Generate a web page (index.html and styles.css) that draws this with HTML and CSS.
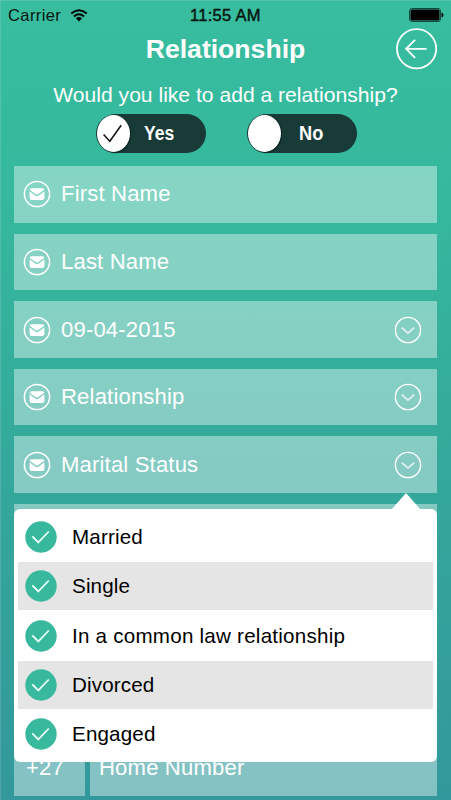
FILE: index.html
```html
<!DOCTYPE html>
<html lang="en">
<head>
<meta charset="utf-8">
<title>Relationship</title>
<link rel="stylesheet" href="styles.css">
</head>
<body>
<svg class="defs" width="0" height="0">
  <symbol id="mail" viewBox="0 0 28 28">
    <circle cx="14" cy="14" r="12.6" fill="none" stroke="currentColor" stroke-width="1.5"/>
    <path d="M8.6 8.2h10.8q2 0 2 1.5L15.1 14.2q-1.1.8-2.2 0L6.6 9.7q0-1.5 2-1.5z" fill="currentColor"/>
    <path d="M6.6 11.2l5.5 4.3q1.9 1.3 3.8 0l5.5-4.3v6.8q0 2-2 2H8.6q-2 0-2-2z" fill="currentColor"/>
  </symbol>
  <symbol id="down" viewBox="0 0 28 28">
    <circle cx="14" cy="14" r="12.6" fill="none" stroke="currentColor" stroke-width="1.4"/>
    <path d="M7.8 11.6l6.2 5.6 6.2-5.6" fill="none" stroke="currentColor" stroke-width="1.7" opacity=".75"/>
  </symbol>
  <symbol id="check" viewBox="0 0 32 32">
    <circle cx="16" cy="16" r="15.7" fill="#38b89d"/>
    <path d="M7.3 15.3l6 6.1L23.8 10.5" fill="none" stroke="currentColor" stroke-width="1.8"/>
  </symbol>
</svg>
<div class="screen">
  <header class="status">
    <span class="carrier">Carrier</span>
    <svg class="wifi" width="18" height="13" viewBox="0 0 18 13">
      <path d="M1.2 4.5Q9-2.2 16.8 4.5M3.9 7.5Q9 3.1 14.1 7.5" fill="none" stroke="#000" stroke-width="1.9"/>
      <path d="M5.9 9.2Q9 6.6 12.1 9.2L9 12.4z"/>
    </svg>
    <span class="time">11:55 AM</span>
    <svg class="battery" width="35" height="14" viewBox="0 0 35 14">
      <rect x=".5" y=".5" width="31" height="13" rx="2.5" fill="none" stroke="#12483d"/>
      <rect x="1.5" y="1.5" width="29" height="11" rx="1.5"/>
      <path d="M32.5 4.5q2 .5 2 2.5t-2 2.5z"/>
    </svg>
  </header>
  <div class="titlebar">
    <h1>Relationship</h1>
    <svg class="back" width="42" height="42" viewBox="0 0 42 42" fill="none" stroke="#fff" stroke-width="1.8">
      <circle cx="20.6" cy="20.8" r="19.6"/>
      <path d="M30.6 20.8H10.3M19.1 11.8l-9 9 9 9"/>
    </svg>
  </div>
  <p class="question">Would you like to add a relationship?</p>
  <div class="toggles">
    <div class="toggle">
      <span class="knob"><svg width="20" height="20" viewBox="0 0 20 20"><path d="M.6 10.5l6.2 6.8L18.2 1.3" fill="none" stroke="#111" stroke-width="1.5"/></svg></span>
      <b>Yes</b>
    </div>
    <div class="toggle no"><span class="knob"></span><b>No</b></div>
  </div>
  <main class="form">
    <div class="field"><svg class="icon"><use href="#mail"/></svg><span>First Name</span></div>
    <div class="field"><svg class="icon"><use href="#mail"/></svg><span>Last Name</span></div>
    <div class="field"><svg class="icon"><use href="#mail"/></svg><span>09-04-2015</span><svg class="icon end"><use href="#down"/></svg></div>
    <div class="field"><svg class="icon"><use href="#mail"/></svg><span>Relationship</span><svg class="icon end"><use href="#down"/></svg></div>
    <div class="field anchor"><svg class="icon"><use href="#mail"/></svg><span>Marital Status</span><svg class="icon end"><use href="#down"/></svg>
      <ul class="menu">
        <li><svg><use href="#check"/></svg><span>Married</span></li>
        <li><svg><use href="#check"/></svg><span>Single</span></li>
        <li><svg><use href="#check"/></svg><span class="long">In a common law relationship</span></li>
        <li><svg><use href="#check"/></svg><span>Divorced</span></li>
        <li><svg><use href="#check"/></svg><span>Engaged</span></li>
      </ul>
    </div>
    <div class="field"></div>
    <div class="phone"><div class="field code"><span>+27</span></div><div class="field number"><span>Home Number</span></div></div>
  </main>
</div>
</body>
</html>
```
FILE: styles.css
```css
* { box-sizing: border-box; }
body { margin: 0; font-family: "Liberation Sans", Arial, sans-serif; }
.defs { position: absolute; }
.screen {
  width: 451px; height: 800px; overflow: hidden; color: #fff;
  background: linear-gradient(#38bd9f 0, #35b89d 25%, #34a59b 66%, #33989b 100%);
  box-shadow: inset 1px 1px 0 rgba(255, 255, 255, .13);
}
.status {
  display: grid; grid-template-columns: 61px 18px 1fr 35px;
  align-items: center; height: 28px; padding: 2px 7px 0 8px; color: #07150f;
}
.wifi { margin-left: .5px; }
.carrier { font-size: 16.5px; letter-spacing: .4px; }
.time { font-size: 16.5px; letter-spacing: .3px; padding-left: 103px; -webkit-text-stroke: .45px #07150f; }
.titlebar { display: grid; grid-template-columns: 1fr 42px; height: 42px; padding-right: 13px; }
h1 { margin: 0 0 0 55px; text-align: center; font-size: 26.6px; line-height: 43px; }
.question { margin: 11px 0 0; height: 28px; text-align: center; font-size: 21.1px; line-height: 28px; white-space: nowrap; }
.toggles { display: flex; gap: 41px; padding: 5px 0 0 96px; height: 57.3px; }
.toggle {
  display: flex; align-items: center; width: 110px; height: 39px; padding-left: 1px;
  border-radius: 20px; background: #183b38;
}
.knob {
  display: flex; align-items: center; justify-content: center; width: 33px; height: 37px;
  border-radius: 50%; background: #fff; box-shadow: 1px 1px 1px #0a2422;
}
.knob svg { margin-right: 1.5px; }
.toggle b { margin-left: 14px; font-size: 20px; transform: scaleX(.88); transform-origin: left; }
.toggle.no b { margin-left: 18px; transform: scaleX(.91); }
.form { display: flex; flex-direction: column; gap: 11.25px; padding: 0 14px; }
.field {
  display: flex; align-items: center; height: 56.3px; padding: 0 15px 0 9px;
  background: rgba(255, 255, 255, .4); font-size: 22.1px; letter-spacing: .16px;
  white-space: nowrap; flex-shrink: 0;
}
.icon { width: 28px; height: 28px; margin-right: 10px; flex: none; }
.end { margin: 0 0 0 auto; }
.anchor { position: relative; }
.menu {
  position: absolute; z-index: 1; left: 0; top: 72.7px; width: 423px; height: 253px;
  margin: 0; padding: 4px; border-radius: 6px; background: #fff; color: #000; list-style: none;
  display: flex; flex-direction: column; gap: 1.2px;
}
.menu::before {
  content: ""; position: absolute; right: 17.5px; top: -16px; border: solid transparent;
  border-width: 0 14px 16.5px; border-bottom-color: #fff;
}
.menu li {
  display: flex; align-items: center; height: 48px; padding-left: 7px;
  font-size: 20.6px; letter-spacing: .15px;
}
.menu li:nth-child(even) { background: #e5e5e5; }
.menu .long { letter-spacing: .23px; }
.menu svg { width: 32px; height: 32px; margin-right: 15px; color: #eafff9; }
.phone { display: flex; gap: 5px; margin-top: 168px; }
.code { width: 71px; padding: 0 0 0 12px; }
.number { flex: 1; }
```
